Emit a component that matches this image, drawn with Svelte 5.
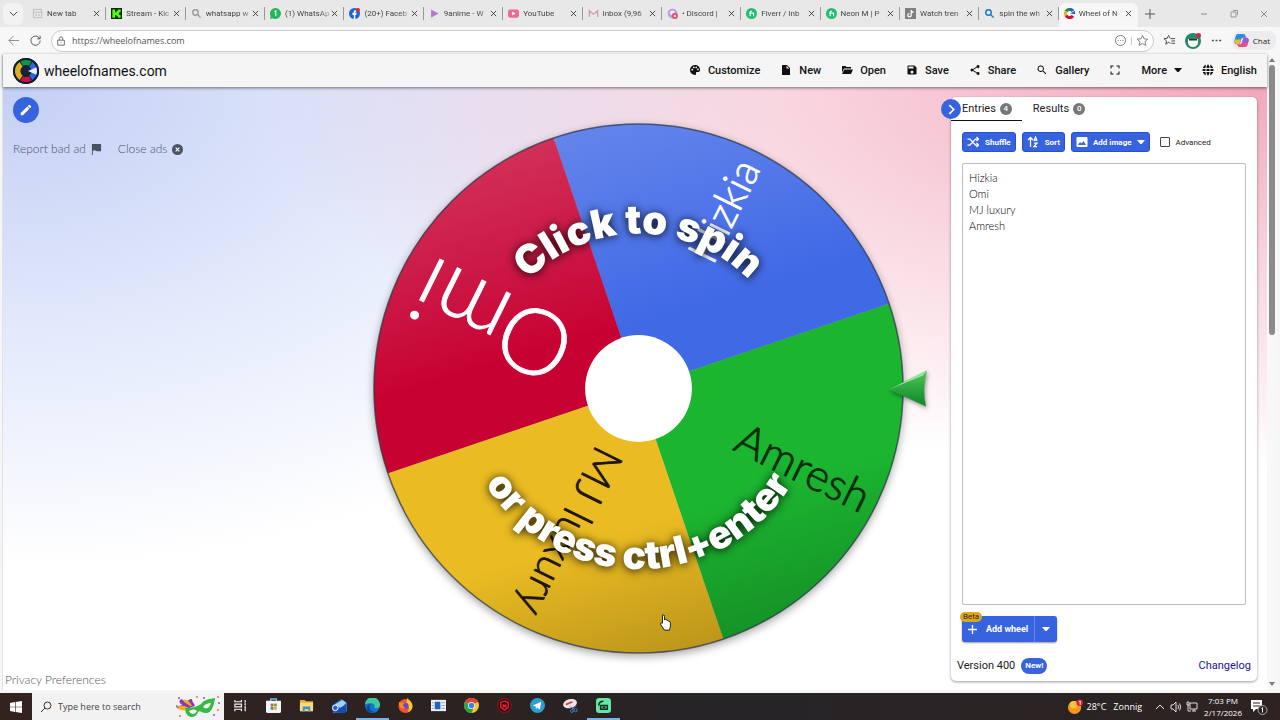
<script lang="ts">
	/**
	 * Wheel of names page inside a browser window, with the desktop taskbar below it.
	 */
	type Slice = { label: string; fill: string; ink: string; size: number; end: number };

	const browserTabs = [
		{ title: 'New tab', icon: 'page' },
		{ title: 'Stream - Kic', icon: 'kick' },
		{ title: 'whatsapp w', icon: 'lens-grey' },
		{ title: '(1) WhatsAp', icon: 'whatsapp' },
		{ title: '(20+) Faceb', icon: 'facebook' },
		{ title: '9anime - W', icon: 'play' },
		{ title: 'YouTube', icon: 'youtube' },
		{ title: 'Inbox (9,96', icon: 'gmail' },
		{ title: '• Discord |', icon: 'discord' },
		{ title: 'Fiverr / Inb', icon: 'fiverr' },
		{ title: 'Neon M | P', icon: 'fiverr' },
		{ title: 'Watch tren', icon: 'tiktok' },
		{ title: 'spin the wh', icon: 'lens-blue' },
		{ title: 'Wheel of N', icon: 'wheel' }
	];

	const menu = [
		{ label: 'Customize', icon: 'palette' },
		{ label: 'New', icon: 'file' },
		{ label: 'Open', icon: 'folder' },
		{ label: 'Save', icon: 'save' },
		{ label: 'Share', icon: 'share' },
		{ label: 'Gallery', icon: 'search' },
		{ label: '', icon: 'fullscreen' },
		{ label: 'More', icon: '' },
		{ label: 'English', icon: 'globe' }
	];

	const icons: Record<string, string> = {
		palette: 'M12 2a10 10 0 0 0 0 20c2 0 2.500-1.500 2-3-.6-2 .5-3 2.500-3H19c2 0 3-2 3-4.500C22 6 17.500 2 12 2zM6.500 13a1.700 1.700 0 1 1 0-3.400 1.700 1.700 0 0 1 0 3.400zM9.500 8.500a1.700 1.700 0 1 1 0-3.400 1.700 1.700 0 0 1 0 3.400zm5 0a1.700 1.700 0 1 1 0-3.400 1.700 1.700 0 0 1 0 3.400zm3.500 4a1.700 1.700 0 1 1 0-3.400 1.700 1.700 0 0 1 0 3.400z',
		file: 'M5 2h9l6 6v14H4V3zM13 3.500V9h5.500z',
		folder: 'M2 4h7l2 2h9v3H6l-4 8zM6.500 11H24l-4 9H2z',
		save: 'M17 3H5a2 2 0 0 0-2 2v14a2 2 0 0 0 2 2h14a2 2 0 0 0 2-2V7zM12 19a3 3 0 1 1 0-6 3 3 0 0 1 0 6zM15 9H5V5h10z',
		share: 'M18 16a3 3 0 0 0-2 .8L8.900 12.700v-1.400L16 7.200A3 3 0 1 0 15 5v.7L8 9.800a3 3 0 1 0 0 4.400l7.100 4.100v.7a3 3 0 1 0 2.900-3z',
		search: 'M15.500 14h-.8l-.3-.3a6.500 6.500 0 1 0-.7.7l.3.3v.8l5 5 1.500-1.500zm-6 0a4.500 4.500 0 1 1 0-9 4.500 4.500 0 0 1 0 9z',
		fullscreen: 'M3 3h6v2H5v4H3zM15 3h6v6h-2V5h-4zM3 15h2v4h4v2H3zM19 15h2v6h-6v-2h4z',
		globe: 'M8 1.500C5 2.500 2.500 5 1.600 8H7c.2-2.500.6-4.500 1-6.500zM9 8h6c-.4-4-1.700-7-3-7S9.400 4 9 8zm7-6.500c.5 2 .8 4 1 6.500h5.400c-.9-3-3.400-5.500-6.400-6.500zM1.200 10v4H7v-4zM9 10v4h6v-4zm8 0v4h5.800v-4zM1.600 16c.9 3 3.400 5.500 6.400 6.500-.5-2-.8-4-1-6.500zM9 16c.4 4 1.700 7 3 7s2.600-3 3-7zm8 0c-.2 2.500-.5 4.500-1 6.500 3-1 5.500-3.500 6.400-6.500z'
	};

	const taskApps = [
		{ name: 'Task view' },
		{ name: 'Store' },
		{ name: 'Explorer' },
		{ name: 'Mail' },
		{ name: 'Edge', open: true },
		{ name: 'Firefox' },
		{ name: 'Reader' },
		{ name: 'Chrome' },
		{ name: 'Game' },
		{ name: 'Telegram' },
		{ name: 'Snip' },
		{ name: 'Recorder', open: true }
	];

	let entries = $state('Hizkia\nOmi\nMJ luxury\nAmresh');
	let advanced = $state(false);
	const count = $derived(entries.split('\n').filter((line) => line.trim()).length);

	const radius = 265;
	const firstAngle = -108.7;
	const slices: Slice[] = [
		{ label: 'Hizkia', fill: '#4069e6', ink: '#fff', size: 42, end: 252 },
		{ label: 'Amresh', fill: '#1bb530', ink: '#082b0c', size: 44, end: 255 },
		{ label: 'MJ luxury', fill: '#eabb22', ink: '#1c1405', size: 43, end: 250 },
		{ label: 'Omi', fill: '#c70233', ink: '#fff', size: 92, end: 244 }
	];

	function point(angle: number): string {
		const rad = (angle * Math.PI) / 180;
		return `${(radius * Math.cos(rad)).toFixed(1)} ${(radius * Math.sin(rad)).toFixed(1)}`;
	}

	function slicePath(i: number): string {
		const from = firstAngle + i * 90;
		return `M0 0L${point(from)}A${radius} ${radius} 0 0 1 ${point(from + 90)}Z`;
	}
</script>

{#snippet favicon(name: string)}
	<svg class="favicon" viewBox="0 0 16 16" aria-hidden="true">
		{#if name === 'page'}
			<path d="M2 2h12v12H2zM2 6h12M5 9h2m2 0h2M5 11h2m2 0h2" fill="none" stroke="#aaa" />
		{:else if name === 'kick'}
			<rect width="16" height="16" fill="#102b0a" />
			<path d="M2 2h4v4h2V4h2V2h4v4h-2v2h-1v1h1v1h2v4h-4v-2H8v-2H6v4H2z" fill="#53fc18" />
		{:else if name === 'lens-grey' || name === 'lens-blue'}
			<g fill="none" stroke={name === 'lens-blue' ? '#1874c9' : '#999'} stroke-width="2">
				<circle cx="6.500" cy="6.500" r="4" /><path d="M9.500 9.500L14 14" />
			</g>
		{:else if name === 'whatsapp'}
			<path d="M8 0a8 8 0 1 1-4 15L0 16l1-4A8 8 0 0 1 8 0z" fill="#23b45d" />
			<path d="M6.500 5.500L8.500 4v8" fill="none" stroke="#fff" stroke-width="1.500" />
		{:else if name === 'facebook'}
			<circle cx="8" cy="8" r="8" fill="#1b63e0" />
			<path d="M7 16v-6H5V7h2V5.500C7 3.500 8.500 3 11 3.300v2.200c-1.500 0-1.800 0-1.800 1V7H11l-.4 3H9.200v6z" fill="#fff" />
			<circle cx="13" cy="3" r="3" fill="#e0243a" />
		{:else if name === 'play'}
			<path d="M3 2l11 6-11 6z" fill="#b07ad0" />
		{:else if name === 'youtube'}
			<rect y="2" width="16" height="12" rx="3" fill="#ee6a94" />
			<path d="M6 5l5 3-5 3z" fill="#fff" />
		{:else if name === 'gmail'}
			<path d="M2 13V4l6 5 6-5v9" fill="none" stroke="#d99bab" stroke-width="2" />
		{:else if name === 'discord'}
			<circle cx="8" cy="8" r="7" fill="#b9a1df" />
			<circle cx="8" cy="7" r="3.500" fill="#f4effc" />
			<circle cx="11.500" cy="11.500" r="4.500" fill="#e25a6d" /><circle cx="11.500" cy="11.500" r="1.500" fill="#fff" />
		{:else if name === 'fiverr'}
			<circle cx="8" cy="8" r="8" fill="#1dbf73" />
			<path d="M6 12V6.500C6 5 7 4.500 8.500 4.500M4.500 7.500H11V12" fill="none" stroke="#fff" stroke-width="1.700" />
		{:else if name === 'tiktok'}
			<rect width="16" height="16" fill="#808080" />
			<path d="M9 3v7.500A2.500 2.500 0 1 1 6.500 8M9 3c.5 2 2 3 3.500 3" fill="none" stroke="#fff" stroke-width="1.800" />
		{:else}
			<g fill="none" stroke-width="4.500">
				<path d="M13 4.500A6 6 0 0 0 7 2.100" stroke="#2563c9" />
				<path d="M8 2A6 6 0 0 0 3 5" stroke="#199b3b" />
				<path d="M3 5A6 6 0 0 0 3 11" stroke="#e9b41c" />
				<path d="M3 11A6 6 0 0 0 13 11.500" stroke="#cb1237" />
			</g>
			<path d="M9 8l7-4v5z" fill="#2563c9" />
		{/if}
	</svg>
{/snippet}

{#snippet caret()}
	<svg class="caret" viewBox="0 0 10 6" aria-hidden="true"><path d="M0 0h10L5 6z" fill="currentColor" /></svg>
{/snippet}

{#snippet appIcon(name: string)}
	<svg class="app-icon" viewBox="0 0 16 16" aria-hidden="true">
		{#if name === 'Task view'}
			<path d="M2 2v2h7V2M2 14v-2h7v2M2 6.500h7v3H2zM13 2v3m0 3v6" fill="none" stroke="#eee" stroke-width="1.300" />
			<circle cx="13" cy="6.500" r="1" fill="#eee" />
		{:else if name === 'Store'}
			<path d="M5 4V1h6v3" fill="none" stroke="#69b9ea" stroke-width="1.500" />
			<path d="M0 3h16v11a2 2 0 0 1-2 2H2a2 2 0 0 1-2-2z" fill="#f4f4f6" />
			<path d="M5 6h3v3H5z" fill="#e0552d" /><path d="M8.500 6h3v3h-3z" fill="#6bab2d" />
			<path d="M5 9.500h3v3H5z" fill="#2b86d4" /><path d="M8.500 9.500h3v3h-3z" fill="#e8ad1d" />
		{:else if name === 'Explorer'}
			<path d="M1 2h5l1.500 1.500H15V14H1z" fill="#e4ad38" />
			<path d="M1 5h14v9H1z" fill="#fbdc78" /><path d="M4 15V9h8v6h-2v-3H6v3z" fill="#3f90cd" />
		{:else if name === 'Mail'}
			<path d="M0 8l10-7 6 4v9l-3 2H1z" fill="#2c6fd8" /><path d="M3 7l8-5 4 3-5 6z" fill="#9fd0fa" />
			<path d="M1 15l14-8v7l-2 2z" fill="#174aae" />
			<circle cx="3.500" cy="10.500" r="3" fill="#2a62c4" stroke="#fff" />
		{:else if name === 'Edge'}
			<circle cx="8" cy="8" r="8" fill="#1676cf" />
			<path d="M0 7a8 8 0 0 1 16 .5C16 10 14 11 12 11c-1.700 0-2.500-.8-1.800-1.800C11 8 9.500 5.500 6.500 5.500 3.500 5.500 1 6 0 7z" fill="#3fcb9e" />
			<path d="M6.500 6.500c-3 2-2 7 4 8.500-6 2-9.500-2-8.500-6C2.500 7 5 6 6.500 6.500z" fill="#0b4c9e" />
		{:else if name === 'Firefox'}
			<circle cx="8" cy="8.500" r="7.500" fill="#f0562c" />
			<path d="M10 0c1 2 5.500 4 5.500 9a7 7 0 0 1-5 6c2-4 1.500-8-2-9z" fill="#fcc62f" />
			<circle cx="7.800" cy="8.500" r="3.500" fill="#7046c8" /><path d="M1 4l3 1.500 3-.5-2 3 3 3c-4 1-6-1-7-4z" fill="#f98c28" />
		{:else if name === 'Reader'}
			<path d="M0 2h16v12H0z" fill="#eef2f8" /><path d="M4 4h6v8H4z" fill="#2564b8" />
			<path d="M11 5h4M11 8h4M11 11h4M1 5h2M1 8h2M1 11h2" stroke="#86a5cf" />
		{:else if name === 'Chrome'}
			<circle cx="8" cy="8" r="8" fill="#f7c928" />
			<path d="M8 8L1 4a8 8 0 0 1 14 0z" fill="#e04334" /><path d="M1 4a8 8 0 0 0 7 12l2.500-6z" fill="#2ba24c" />
			<circle cx="8" cy="8" r="3.800" fill="#fff" /><circle cx="8" cy="8" r="3" fill="#3d7eea" />
		{:else if name === 'Game'}
			<circle cx="8" cy="8" r="7.300" fill="#35050a" stroke="#a3161f" />
			<path d="M4 5c2-2 6-2 8 0v5l-4 3-4-3zm2 2l4 3m0-3l-4 3" fill="none" stroke="#df2634" stroke-width="1.500" />
		{:else if name === 'Telegram'}
			<circle cx="8" cy="8" r="8" fill="#2f9bd0" /><path d="M3 8l9-4-1.500 8.500L7.500 10 6.300 12 6 9z" fill="#fff" />
		{:else if name === 'Snip'}
			<ellipse cx="7.500" cy="6" rx="7.500" ry="4.800" fill="#eee4e4" transform="rotate(-15 7.500 6)" />
			<path d="M3 7l7-3" stroke="#c04650" stroke-width="2" />
			<path d="M7 9l5 3m2-4l-4 4" stroke="#5788bb" /><circle cx="13.500" cy="13" r="1.700" fill="none" stroke="#4a83c4" /><circle cx="9.500" cy="14" r="1.500" fill="none" stroke="#4a83c4" />
		{:else}
			<rect width="16" height="16" rx="3.500" fill="#64e8a3" />
			<path d="M3 8c0-3 2-4.500 5-4.500M5 12V8h7v4z" fill="none" stroke="#0c3122" stroke-width="1.700" /><path d="M7 9h3v2H7z" fill="#0c3122" />
		{/if}
	</svg>
{/snippet}

<div class="desktop">
	<div class="tab-strip">
		<button class="tab-menu" aria-label="Tab actions">
			<svg viewBox="0 0 10 6"><path d="M1 1l4 4 4-4" fill="none" stroke="#333" /></svg>
		</button>
		<div class="browser-tabs">
			{#each browserTabs as tab, i}
				<div class="browser-tab" class:active={i === browserTabs.length - 1}>
					{@render favicon(tab.icon)}
					<span class="tab-title">{tab.title}</span>
					<button class="tab-close" aria-label="Close tab">
						<svg viewBox="0 0 8 8"><path d="M1 1l6 6M7 1L1 7" fill="none" stroke="#333" /></svg>
					</button>
				</div>
			{/each}
		</div>
		<div class="window-controls">
			<button aria-label="New tab"><svg viewBox="0 0 12 12"><path d="M6 1v10M1 6h10" fill="none" stroke="#555" /></svg></button>
			<button class="minimize" aria-label="Minimize"><svg viewBox="0 0 12 12"><path d="M3 6h6" fill="none" stroke="#888" /></svg></button>
			<button aria-label="Restore"><svg viewBox="0 0 12 12"><path d="M3 4h5v5H3zM5 2.500h4.500V7" fill="none" stroke="#999" /></svg></button>
			<button aria-label="Close window"><svg viewBox="0 0 12 12"><path d="M3 3l6 6M9 3l-6 6" fill="none" stroke="#888" /></svg></button>
		</div>
	</div>

	<div class="toolbar">
		<button class="tool" aria-label="Back"><svg viewBox="0 0 14 14"><path d="M13 7H2M7 2L2 7l5 5" fill="none" stroke="#888" /></svg></button>
		<button class="tool" aria-label="Reload"><svg viewBox="0 0 14 14"><path d="M11.500 5A5 5 0 1 0 12 7M12 2v3.200H8.800" fill="none" stroke="#555" /></svg></button>
		<div class="address">
			<svg class="lock" viewBox="0 0 12 12" aria-hidden="true"><path d="M2 5h8v6H2zM4 5V3a2 2 0 0 1 4 0v2M6 7.500v1" fill="none" stroke="#555" /></svg>
			<input class="url" type="text" aria-label="Address" value="https://wheelofnames.com" />
			<svg class="address-icon" viewBox="0 0 14 14" aria-hidden="true"><circle cx="7" cy="7" r="5.500" fill="none" stroke="#777" /><path d="M4 7h1m1.500 0h1M9 7h1" stroke="#777" /></svg>
			<span class="divider"></span>
			<svg class="address-icon" viewBox="0 0 14 14" aria-hidden="true"><path d="M7 1.500l1.700 3.700 4 .4-3 2.700.9 4L7 10.200l-3.600 2.100.9-4-3-2.700 4-.4z" fill="none" stroke="#777" /></svg>
		</div>
		<button class="tool" aria-label="Favorites"><svg viewBox="0 0 14 14"><path d="M8 10L6 9l-3 2 .8-3.500L1 5l3.500-.4L6 1.500l1.500 3M8 5h5M9 7.500h4M9 10h4" fill="none" stroke="#444" /></svg></button>
		<button class="tool profile" aria-label="Profile">
			<svg viewBox="0 0 16 16"><circle cx="8" cy="8" r="8" fill="#258a6c" /><path d="M3 6h10v4a5 4 0 0 1-10 0z" fill="#f6f6f2" /><path d="M4 6h8v1.500H4z" fill="#143b2f" /><circle cx="13.500" cy="2.500" r="2.500" fill="#cc284a" /></svg>
		</button>
		<button class="tool" aria-label="Settings"><svg viewBox="0 0 14 14"><path d="M2 7h2m2 0h2m2 0h2" stroke="#444" stroke-width="1.500" /></svg></button>
		<button class="chat">
			<svg viewBox="0 0 16 16" aria-hidden="true">
				<path d="M5 1h5c2 0 2 2 3 4h-3c-2 0-2.500 1.500-3 4l-1 3H3c-3 0-3-3-2-6s1-5 4-5z" fill="#2a8be0" />
				<path d="M1 7h6l-1 5H3c-2 0-3-2-2-5z" fill="#e7bd27" />
				<path d="M11 15H6c-2 0-2-2-3-3h3c2 0 2.500-2 3-4l1-3h3c3 0 3 3 2 6s-1 4-4 4z" fill="#e3508d" />
				<path d="M10 5h3c3 0 3 2 2 5H9z" fill="#9b5ce0" />
			</svg>
			Chat
		</button>
	</div>

	<div class="viewport">
		<div class="site">
			<header class="site-header">
				<a class="brand" href="#home">
					<svg class="logo" viewBox="0 0 26 26" aria-hidden="true">
						<circle cx="13" cy="13" r="13" fill="#101f38" />
						<g fill="none" stroke-width="6">
							<path d="M8.500 5.200A9 9 0 0 1 17.500 5.200" stroke="#159447" />
							<path d="M8 20A8.600 8.600 0 0 1 8 6" stroke="#dfae1f" />
							<path d="M17.500 20.800A9 9 0 0 1 8.500 20.800" stroke="#d3103c" />
							<path d="M18 6A8.600 8.600 0 0 1 18 20" stroke="#3267da" />
						</g>
						<circle cx="13" cy="13" r="4" fill="#14253c" />
						<path d="M15 13l9-4v8z" fill="#e8f0ff" />
						<circle cx="13" cy="13" r="12" fill="none" stroke="#101f38" stroke-width="2" />
					</svg>
					wheelofnames.com
				</a>
				<nav class="menu">
					{#each menu as item}
						<button class="menu-item" aria-label={item.label || 'Fullscreen'}>
							{#if item.icon}
								<svg class="menu-icon" viewBox="0 0 24 24" aria-hidden="true"><path d={icons[item.icon]} fill="currentColor" fill-rule="evenodd" /></svg>
							{/if}
							{#if item.label}<span>{item.label}</span>{/if}
							{#if item.label === 'More'}{@render caret()}{/if}
						</button>
					{/each}
				</nav>
			</header>

			<main class="stage">
				<aside class="left">
					<button class="edit" aria-label="Edit title">
						<svg viewBox="0 0 24 24"><path d="M3 17.200V21h3.800L17.800 9.900l-3.700-3.700zM20.700 7a1 1 0 0 0 0-1.400l-2.300-2.300a1 1 0 0 0-1.400 0L15.100 5.200 18.800 9z" fill="#fff" /></svg>
					</button>
					<div class="ad-links">
						<button>
							Report bad ad
							<svg viewBox="0 0 12 12" aria-hidden="true"><path d="M1 0h10v8H6L5 7H2v5H1z" fill="currentColor" /></svg>
						</button>
						<button>
							Close ads
							<svg viewBox="0 0 12 12" aria-hidden="true"><circle cx="6" cy="6" r="6" fill="currentColor" /><path d="M4 4l4 4M8 4L4 8" stroke="#fff" stroke-width="1.300" /></svg>
						</button>
					</div>
					<a class="privacy" href="#privacy">Privacy Preferences</a>
				</aside>

				<button class="wheel" aria-label="Spin the wheel">
					<svg viewBox="-302 -302 604 604">
						<defs>
							<linearGradient id="shine" x1="0.3" y1="0" x2="0.6" y2="1">
								<stop offset="0" stop-color="#fff" stop-opacity="0.2" />
								<stop offset="0.4" stop-color="#fff" stop-opacity="0" />
								<stop offset="0.75" stop-color="#000" stop-opacity="0" />
								<stop offset="1" stop-color="#000" stop-opacity="0.2" />
							</linearGradient>
							<linearGradient id="pointer" x1="0" y1="0" x2="0" y2="1">
								<stop offset="0" stop-color="#4ac858" />
								<stop offset="1" stop-color="#128625" />
							</linearGradient>
							<path id="arc-top" d="M-155 0A155 155 0 0 1 155 0" />
							<path id="arc-bottom" d="M-181 0A181 181 0 0 0 181 0" />
						</defs>
						<g class="disc">
							{#each slices as slice, i}
								<path d={slicePath(i)} fill={slice.fill} />
							{/each}
							<circle r="265" fill="url(#shine)" />
							<circle r="265" fill="none" stroke="#263445" stroke-opacity="0.7" stroke-width="1.500" />
						</g>
						{#each slices as slice, i}
							<text
								class="slice-label"
								x={slice.end}
								y={slice.size * -0.08}
								text-anchor="end"
								dominant-baseline="central"
								font-size={slice.size}
								fill={slice.ink}
								stroke={slice.ink}
								transform="rotate({firstAngle + 45 + i * 90})">{slice.label}</text>
						{/each}
						<circle r="53.500" fill="#fff" />
						<text class="hint" text-anchor="middle" font-size="40"><textPath href="#arc-top" startOffset="50%">Click to spin</textPath></text>
						<text class="hint" text-anchor="middle" font-size="39"><textPath href="#arc-bottom" startOffset="50%">or press ctrl+enter</textPath></text>
						<path class="pointer" d="M251 1L289-18Q284 1 288 18Z" fill="url(#pointer)" />
						<path d="M251 1L289-18L285-13Z" fill="#9be3a2" />
						<path d="M24 227q2-1 2 1v4l1-1q1 0 1 1 2 0 2 1 2 0 2 2v3l-1 4h-5l-4-6q0-2 2-1z" fill="#fff" stroke="#222" />
					</svg>
				</button>

				<aside class="side">
					<section class="panel">
						<button class="collapse" aria-label="Hide panel">
							<svg viewBox="0 0 10 10"><path d="M3 1l4 4-4 4" fill="none" stroke="#fff" stroke-width="1.500" /></svg>
						</button>
						<div class="panel-tabs">
							<button class="panel-tab selected">Entries <span class="count">{count}</span></button>
							<button class="panel-tab">Results <span class="count">0</span></button>
						</div>
						<div class="panel-body">
							<div class="actions">
								<button class="action shuffle">
									<svg viewBox="0 0 24 24" aria-hidden="true"><path d="M1 6h5l11 12h5M1 18h5L17 6h5M19 2l4 4-4 4M19 14l4 4-4 4" fill="none" stroke="currentColor" stroke-width="2.500" /></svg>
									Shuffle
								</button>
								<button class="action sort">
									<svg viewBox="0 0 24 24" aria-hidden="true"><path d="M7 22V3M2 8l5-5 5 5M14 10l3-8 3 8M15 8h4M14 14h6l-6 7h6" fill="none" stroke="currentColor" stroke-width="2.500" /></svg>
									Sort
								</button>
								<button class="action image">
									<svg viewBox="0 0 24 24" aria-hidden="true"><path d="M3 2h18a2 2 0 0 1 2 2v16a2 2 0 0 1-2 2H3a2 2 0 0 1-2-2V4a2 2 0 0 1 2-2zm1 16h16l-5-8-4 5-3-3z" fill="currentColor" fill-rule="evenodd" /></svg>
									Add image
									{@render caret()}
								</button>
								<label class="advanced"><input type="checkbox" bind:checked={advanced} /> Advanced</label>
							</div>
							<textarea class="entries" aria-label="Entries" spellcheck="false" bind:value={entries}></textarea>
							<div class="add-wheel">
								<button class="add-main"><svg viewBox="0 0 10 10" aria-hidden="true"><path d="M5 0v10M0 5h10" stroke="#fff" stroke-width="1.500" /></svg>Add wheel</button>
								<button class="add-more" aria-label="More wheel options">{@render caret()}</button>
								<span class="beta">Beta</span>
							</div>
						</div>
						<footer class="panel-footer">
							<span>Version 400</span>
							<span class="new">New!</span>
							<a href="#changelog">Changelog</a>
						</footer>
					</section>
				</aside>
			</main>
		</div>
		<div class="scrollbar" aria-hidden="true">
			<svg viewBox="0 0 6 4"><path d="M0 4l3-4 3 4z" fill="#777" /></svg>
			<div class="thumb"></div>
			<svg viewBox="0 0 6 4"><path d="M0 0l3 4 3-4z" fill="#777" /></svg>
		</div>
	</div>

	<div class="taskbar">
		<button class="start" aria-label="Start">
			<svg viewBox="0 0 12 12"><path d="M0 2l5-1v4.700H0zM5.600.9L12 0v5.700H5.600zM0 6.300h5V11l-5-1zM5.600 6.300H12V12l-6.400-.9z" fill="#fff" /></svg>
		</button>
		<div class="search">
			<svg class="search-icon" viewBox="0 0 12 12" aria-hidden="true"><circle cx="7.500" cy="4.500" r="3.500" fill="none" stroke="#333" /><path d="M5 7L1 11" stroke="#333" /></svg>
			<input type="text" aria-label="Search" placeholder="Type here to search" />
			<svg class="mask" viewBox="0 0 46 24" aria-hidden="true">
				<path d="M14 13C8 13 1 16 1 10c3 2 5 0 7 0C4 9 3 5 7 4c1 2 3 2 5 4 0-3 3-4 5-4 0 3 2 4 3 7z" fill="#8a3bb0" />
				<path d="M15 14C8 17 3 15 2 11c4 1 7-2 13 3zM15 11C13 9 9 8 8 5c4-1 7 2 9 6z" fill="#f1ad20" />
				<path d="M10 13c6 0 12-1 16-4 4-5 9-5 14-6-1 7-3 15-9 15-5 0-6-3-8-1-2 6-9 7-12 1-1-2 0-3-1-5z" fill="#35b844" />
				<path d="M14 16c3-2 6-2 8 0-2 4-6 4-8 0zM28 12c2-3 5-4 8-4-1 5-5 7-8 4z" fill="#f3f3f3" />
				<g fill="#9a4cbd"><circle cx="4" cy="3" r="1" /><circle cx="29" cy="3" r="1" /><circle cx="44" cy="8" r="1" /><circle cx="39" cy="20" r="1" /></g>
				<g fill="#e8783c"><circle cx="22" cy="2" r="1" /><circle cx="43" cy="2" r="1" /><circle cx="5" cy="21" r="1" /><circle cx="43" cy="15" r="1" /></g>
			</svg>
		</div>
		<div class="task-apps">
			{#each taskApps as app}
				<button class="task-app" class:open={app.open} aria-label={app.name}>{@render appIcon(app.name)}</button>
			{/each}
		</div>
		<div class="tray">
			<svg class="weather" viewBox="0 0 16 16" aria-hidden="true"><circle cx="7" cy="9" r="7" fill="#f29a1f" /><circle cx="6" cy="6" r="4" fill="#fbc23d" /><circle cx="12.500" cy="4" r="3.500" fill="#d32630" /><path d="M12 3l1-1v4" fill="none" stroke="#fff" /></svg>
			<span class="temperature">28°C</span>
			<span class="forecast">Zonnig</span>
			<svg class="tray-icon" viewBox="0 0 12 12" aria-hidden="true"><path d="M2 8l4-4 4 4" fill="none" stroke="#eee" /></svg>
			<svg class="tray-icon" viewBox="0 0 12 12" aria-hidden="true"><path d="M1 4h2l3-3v10L3 8H1zM8 4q1 2 0 4M9.500 2.500q2.500 3.500 0 7" fill="none" stroke="#ddd" /></svg>
			<svg class="tray-icon" viewBox="0 0 12 12" aria-hidden="true"><path d="M4 2h7v6H4zM6 10h4M8 8v2M1 1h2v3H1zM2 4v6h3" fill="none" stroke="#ddd" /></svg>
			<div class="clock"><span>7:03 PM</span><span>2/17/2026</span></div>
			<svg class="notices" viewBox="0 0 18 18" aria-hidden="true"><path d="M1 2h11v9H6l-3 3v-3H1z" fill="#fff" /><path d="M3 5h7M3 8h7" stroke="#2b2323" /><circle cx="12.500" cy="12" r="4.500" fill="#2b2323" stroke="#aaa" /><path d="M11.500 10.500l1-1v5" fill="none" stroke="#fff" /></svg>
		</div>
	</div>
</div>

<style>
	:global(body) {
		margin: 0;
	}

	.desktop {
		display: flex;
		flex-direction: column;
		height: 100vh;
		overflow: hidden;
		background: #f6f6f6;
		color: #222;
		font-family: Roboto, sans-serif;
	}

	.desktop * {
		box-sizing: border-box;
	}

	button {
		display: flex;
		align-items: center;
		padding: 0;
		border: 0;
		background: none;
		color: inherit;
		font: inherit;
		white-space: nowrap;
		cursor: pointer;
	}

	svg {
		display: block;
		flex: none;
	}

	/* Browser chrome */
	.tab-strip {
		display: flex;
		height: 27px;
		background: #e7e8e7;
	}

	.tab-menu {
		justify-content: center;
		width: 20px;
		margin: 3px 4px 2px 3px;
		border-radius: 6px;
		background: #f2f2f2;
	}

	.tab-menu svg {
		width: 9px;
	}

	.browser-tabs {
		display: flex;
		flex: 1;
		min-width: 0;
		padding-top: 3px;
	}

	.browser-tab {
		display: flex;
		flex: 1;
		align-items: center;
		min-width: 0;
		padding: 0 6px 3px 5px;
		background: linear-gradient(#999, #999) right 4px / 1px 13px no-repeat;
	}

	.browser-tab.active {
		border-radius: 6px 6px 0 0;
		background: #f7f7f7;
	}

	.favicon {
		width: 11px;
		height: 11px;
		margin-right: 4px;
	}

	.tab-title {
		flex: 1;
		color: #444;
		font-size: 8px;
		line-height: 12px;
		white-space: nowrap;
		mask-image: linear-gradient(90deg, #000 75%, rgba(0, 0, 0, 0.2));
	}

	.tab-close svg {
		width: 7px;
	}

	.window-controls {
		display: flex;
		align-items: center;
		gap: 18px;
		padding: 0 10px 0 6px;
	}

	.window-controls svg {
		width: 12px;
	}

	.minimize {
		margin-left: 24px;
	}

	.toolbar {
		display: flex;
		align-items: center;
		gap: 9px;
		height: 27px;
		padding: 0 4px 0 7px;
		background: #f7f7f7;
		font-family: 'Open Sans', sans-serif;
	}

	.tool svg {
		width: 13px;
	}

	.tool.profile svg {
		width: 16px;
	}

	.address {
		display: flex;
		flex: 1;
		align-items: center;
		gap: 6px;
		height: 22px;
		padding: 0 4px;
		border: 1px solid #ccc;
		border-radius: 11px;
		background: #fff;
	}

	.lock {
		width: 10px;
	}

	.url {
		flex: 1;
		min-width: 0;
		padding: 0;
		border: 0;
		background: none;
		color: #555;
		font: 9px/16px 'Open Sans', sans-serif;
	}

	.address-icon {
		width: 13px;
	}

	.divider {
		width: 1px;
		height: 8px;
		margin: 0 -2px;
		background: #ccc;
	}

	.chat {
		gap: 4px;
		height: 19px;
		padding: 0 6px 0 2px;
		border-radius: 8px;
		background: #ececec;
		font-size: 8px;
	}

	.chat svg {
		width: 15px;
	}

	/* Site */
	.viewport {
		display: flex;
		flex: 1;
		min-height: 0;
		margin: 0 3px 3px 2px;
		border-left: 1px solid #e2e2e2;
		background: #fff;
	}

	.site {
		display: flex;
		flex: 1;
		flex-direction: column;
		min-width: 0;
	}

	.site-header {
		position: relative;
		display: flex;
		justify-content: space-between;
		height: 33px;
		padding: 0 10px;
		background: #f5f5f5;
		box-shadow: 0 1px 3px rgba(0, 0, 0, 0.5);
	}

	.brand {
		display: flex;
		align-items: center;
		gap: 5px;
		color: #111;
		font-size: 14px;
		text-decoration: none;
	}

	.logo {
		width: 26px;
	}

	.menu {
		display: flex;
		align-items: center;
		gap: 20px;
		padding-bottom: 1px;
		color: #111;
		font-size: 11px;
		font-weight: 500;
	}

	.menu-item {
		gap: 7px;
	}

	.menu-icon {
		width: 12px;
	}

	.caret {
		width: 8px;
	}

	.stage {
		display: grid;
		flex: 1;
		grid-template-columns: 323px minmax(0, 1fr) 316px;
		grid-template-rows: minmax(0, 1fr);
		min-height: 0;
		background:
			radial-gradient(ellipse 80% 64% at 100% 0%, rgba(222, 38, 88, 0.4), rgba(222, 38, 88, 0.18) 50%, transparent),
			radial-gradient(ellipse 62% 80% at 0% 0%, rgba(50, 90, 220, 0.29), rgba(50, 100, 230, 0.14) 50%, transparent),
			#fff;
	}

	.left {
		display: flex;
		flex-direction: column;
		align-items: flex-start;
		padding: 10px 0 2px 10px;
		color: #4c5365;
		font: 300 12px/16px Lato, sans-serif;
	}

	.edit {
		justify-content: center;
		width: 26px;
		height: 26px;
		border-radius: 50%;
		background: #3763df;
	}

	.edit svg {
		width: 14px;
	}

	.ad-links {
		display: flex;
		gap: 16px;
		margin-top: 18px;
	}

	.ad-links button {
		gap: 5px;
	}

	.ad-links svg {
		width: 11px;
		color: #4b5363;
	}

	.privacy {
		margin: auto 0 0 -8px;
		color: #555;
		text-decoration: none;
	}

	.wheel {
		justify-content: center;
		min-width: 0;
	}

	.wheel svg {
		width: 100%;
		height: 100%;
	}

	.disc {
		filter: drop-shadow(0 3px 4px rgba(0, 0, 0, 0.35));
	}

	.slice-label {
		font-family: Lato, sans-serif;
		font-weight: 300;
		stroke-linejoin: round;
		stroke-width: 0.8px;
	}

	.hint {
		fill: #fff;
		font-family: Inter, sans-serif;
		font-weight: 900;
		filter: drop-shadow(0 1px 5px rgba(0, 0, 0, 0.9));
	}

	.pointer {
		filter: drop-shadow(1px 2px 2px rgba(0, 0, 0, 0.4));
	}

	.side {
		display: flex;
		padding: 10px 10px 9px 0;
	}

	.panel {
		position: relative;
		display: flex;
		flex: 1;
		flex-direction: column;
		min-width: 0;
		border-radius: 5px;
		background: #fff;
		box-shadow: 0 1px 3px rgba(0, 0, 0, 0.4);
	}

	.collapse {
		position: absolute;
		top: 2px;
		left: -10px;
		justify-content: center;
		width: 20px;
		height: 20px;
		border-radius: 50%;
		background: #3763df;
	}

	.collapse svg {
		width: 11px;
	}

	.panel-tabs {
		display: flex;
		height: 24px;
		font-size: 11px;
	}

	.panel-tab {
		gap: 4px;
		padding: 0 10px 0 11px;
		border-bottom: 1px solid transparent;
	}

	.panel-tab.selected {
		border-color: #111;
	}

	.count {
		min-width: 12px;
		border-radius: 6px;
		background: #777;
		color: #fff;
		font-size: 8px;
		font-weight: 500;
		line-height: 12px;
		text-align: center;
	}

	.panel-body {
		display: flex;
		flex: 1;
		flex-direction: column;
		min-height: 0;
		padding: 11px 11px 0;
	}

	.actions {
		display: flex;
		align-items: center;
		gap: 6px;
		font-size: 8px;
	}

	.action {
		height: 20px;
		padding: 0 4px;
		border: 1px solid #2451cf;
		border-radius: 3px;
		background: #3763df;
		color: #fff;
		font-weight: 700;
	}

	.action > svg:first-child {
		width: 12px;
	}

	.action.shuffle,
	.action.sort {
		gap: 6px;
	}

	.action.image {
		gap: 5px;
	}

	.advanced {
		display: flex;
		align-items: center;
		gap: 6px;
		margin-left: 4px;
	}

	.advanced input {
		width: 10px;
		height: 10px;
		margin: 0;
		border: 1px solid #444;
		border-radius: 1px;
		appearance: none;
	}

	.advanced input:checked {
		background: #3763df;
	}

	.entries {
		flex: 1;
		min-height: 0;
		margin-top: 11px;
		padding: 6px;
		border: 1px solid #bbb;
		border-radius: 2px;
		outline: none;
		color: #000;
		font: 300 11px/16px Lato, sans-serif;
		resize: none;
	}

	.add-wheel {
		position: relative;
		display: flex;
		align-self: flex-start;
		height: 26px;
		margin-top: 11px;
		border-radius: 3px;
		background: #3763df;
		color: #fff;
		font-size: 9px;
		font-weight: 700;
		box-shadow: 0 1px 2px rgba(0, 0, 0, 0.4);
	}

	.add-main {
		gap: 9px;
		padding: 0 6px;
	}

	.add-main svg {
		width: 9px;
	}

	.add-more {
		padding: 0 7px;
		border-left: 1px solid #6386ea;
	}

	.beta {
		position: absolute;
		top: -4px;
		left: -2px;
		padding: 0 3px;
		border-radius: 5px;
		background: #dca91e;
		color: #332704;
		font-size: 8px;
		font-weight: 400;
		line-height: 10px;
	}

	.panel-footer {
		display: flex;
		align-items: center;
		gap: 6px;
		height: 39px;
		padding: 8px 6px 0;
		font-size: 11px;
	}

	.panel-footer a {
		margin-left: auto;
		color: #2411a8;
		text-decoration: none;
	}

	.new {
		padding: 0 4px;
		border-radius: 8px;
		background: #3763df;
		color: #fff;
		font-size: 8px;
		font-weight: 700;
		line-height: 16px;
	}

	.scrollbar {
		display: flex;
		flex-direction: column;
		align-items: center;
		justify-content: space-between;
		width: 10px;
		padding: 4px 0;
		background: #f8f8f8;
	}

	.scrollbar svg {
		width: 6px;
	}

	.thumb {
		width: 6px;
		height: 43%;
		margin: 3px 0 auto;
		border-radius: 3px;
		background: #8b8b8b;
	}

	/* Taskbar */
	.taskbar {
		display: flex;
		height: 27px;
		background: linear-gradient(90deg, #32231f, #2a2222 45%, #262428 55%, #2e2321);
		color: #fff;
		font-family: 'Open Sans', sans-serif;
	}

	.start {
		justify-content: center;
		width: 32px;
	}

	.start svg {
		width: 12px;
	}

	.search {
		display: flex;
		align-items: center;
		gap: 6px;
		width: 192px;
		padding: 0 3px 0 8px;
		background: #f2f2f2;
	}

	.search-icon {
		width: 12px;
	}

	.search input {
		flex: 1;
		min-width: 0;
		padding: 0;
		border: 0;
		background: none;
		font: 9px/16px 'Open Sans', sans-serif;
	}

	.search input::placeholder {
		color: #444;
		opacity: 1;
	}

	.mask {
		width: 46px;
	}

	.task-apps {
		display: flex;
	}

	.task-app {
		justify-content: center;
		width: 33px;
		border-bottom: 2px solid transparent;
	}

	.task-app.open {
		border-color: #76b4e8;
	}

	.app-icon {
		width: 15px;
	}

	.tray {
		display: flex;
		align-items: center;
		gap: 4px;
		margin-left: auto;
		padding-right: 12px;
		font-size: 9px;
	}

	.weather {
		width: 15px;
	}

	.forecast {
		margin: 0 8px 0 3px;
	}

	.tray-icon {
		width: 12px;
	}

	.clock {
		display: flex;
		flex-direction: column;
		align-items: center;
		margin: 0 4px 0 2px;
		font-size: 8px;
		line-height: 12px;
	}

	.notices {
		width: 18px;
	}
</style>
